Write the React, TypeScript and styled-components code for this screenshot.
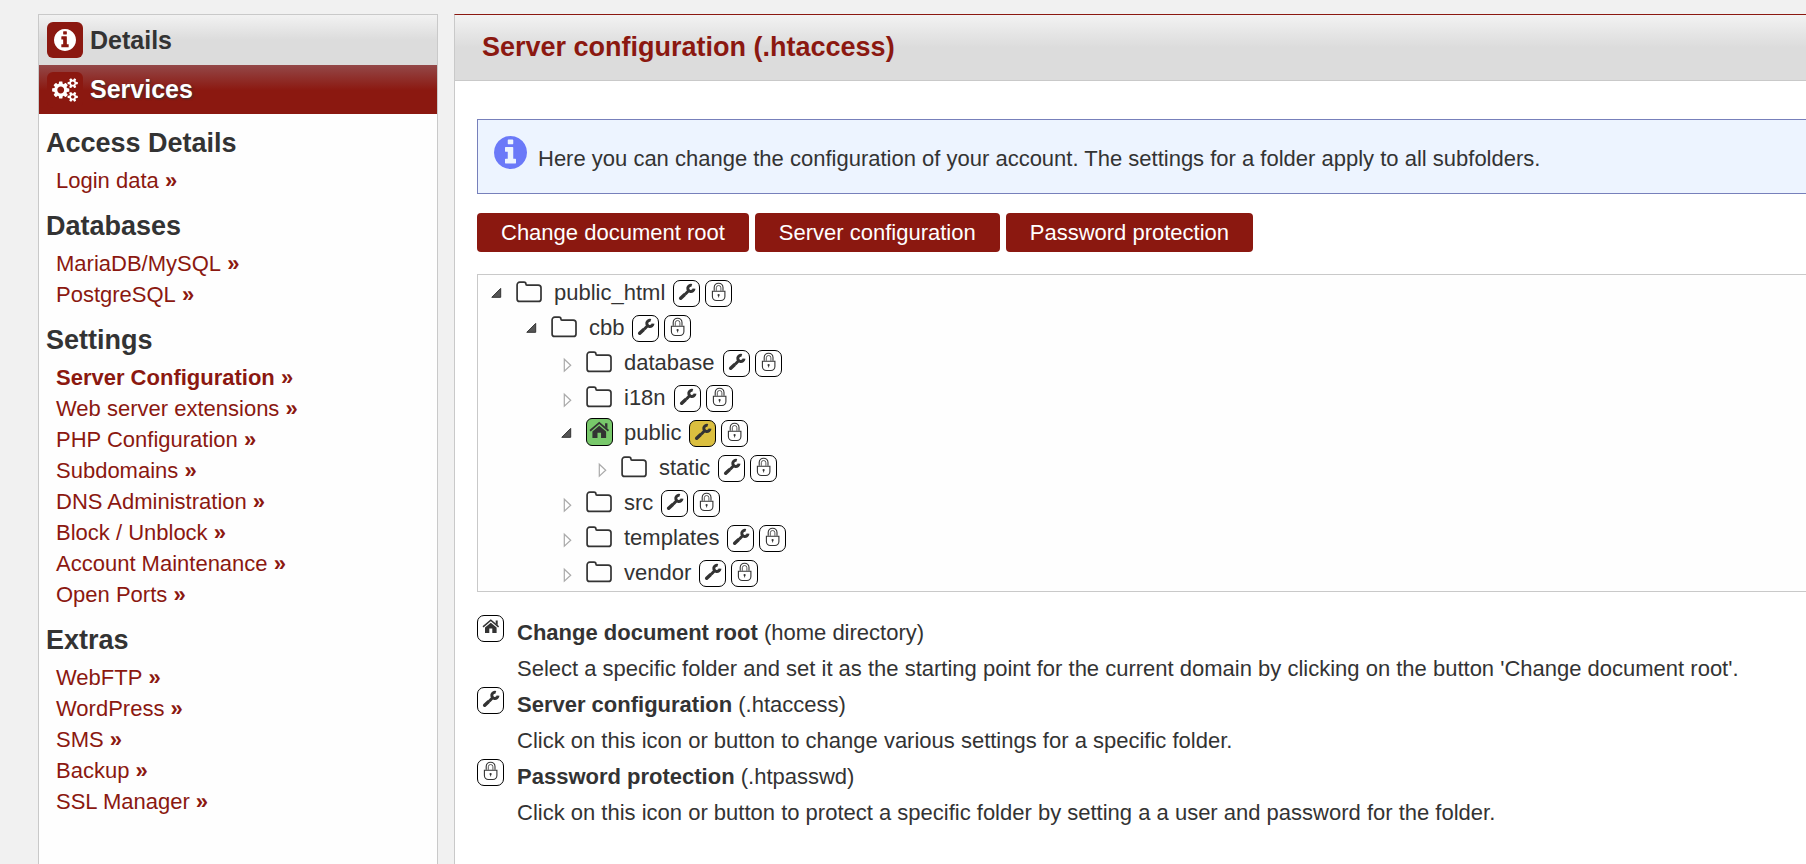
import React, { useState } from "react";
import styled, { createGlobalStyle, css } from "styled-components";

const red = "#8b1810";
const ink = "#333333";
const line = "#c9c9c9";

const GlobalStyle = createGlobalStyle`
  *, *::before, *::after { box-sizing: border-box; }
  body {
    margin: 0;
    background: #f1f1f1;
    color: ${ink};
    font-family: "Liberation Sans", Arial, Helvetica, sans-serif;
    font-size: 22px;
  }
  button { font: inherit; color: inherit; cursor: pointer; }
`;

const Page = styled.div`
  display: flex;
  gap: 16px;
  min-height: 100vh;
  padding: 14px 0 0 38px;
`;

/* ---------- sidebar ---------- */

const Sidebar = styled.aside`
  flex: 0 0 400px;
  background: #fefefe;
  border: 1px solid ${line};
  border-bottom: 0;
`;

const SideTab = styled.a<{ $active?: boolean }>`
  display: flex;
  align-items: center;
  gap: 7px;
  height: 50px;
  padding: 0 8px;
  font-size: 25px;
  font-weight: 700;
  text-decoration: none;
  color: ${ink};
  background: linear-gradient(#f2f2f2, #dcdcdc 50%);
  ${(p) =>
    p.$active &&
    css`
      height: 49px;
      color: #fff;
      text-shadow: 1px 1px 2px #333;
      background: linear-gradient(#934848, ${red} 52%);
    `}
`;

const TabIcon = styled.span`
  display: flex;
  align-items: center;
  justify-content: center;
  width: 36px;
  height: 36px;
  border-radius: 6px;
  background: ${red};
  color: #fff;
`;

const SideNav = styled.nav`
  padding: 14px 7px 32px;
`;

const NavGroup = styled.section`
  & + & { margin-top: 15px; }
`;

const NavHeading = styled.h2`
  margin: 0 0 6px;
  font-size: 27px;
  line-height: 31px;
`;

const NavList = styled.ul`
  margin: 0;
  padding: 0 0 0 10px;
  list-style: none;
`;

const NavItem = styled.li`
  line-height: 31px;
`;

const NavLink = styled.a<{ $current?: boolean }>`
  color: ${red};
  text-decoration: none;
  font-weight: ${(p) => (p.$current ? 700 : 400)};
  &::after {
    content: " »";
    font-weight: 700;
  }
`;

/* ---------- main panel ---------- */

const Main = styled.main`
  flex: 1;
  min-width: 0;
  background: #fff;
  border-left: 1px solid ${line};
  border-top: 1px solid ${red};
`;

const TitleBar = styled.header`
  padding: 17px 27px;
  border-bottom: 1px solid ${line};
  background: linear-gradient(#f2f2f2, #dcdcdc 50%);
`;

const Title = styled.h1`
  margin: 0;
  font-size: 27px;
  line-height: 31px;
  color: ${red};
`;

const Content = styled.div`
  padding: 38px 0 24px 22px;
`;

const InfoBox = styled.div`
  display: flex;
  align-items: flex-start;
  gap: 11px;
  padding: 16px;
  border: 1px solid #7780bb;
  border-right: 0;
  background: #edf4ff;
`;

const InfoMark = styled.span`
  display: flex;
  color: #6b79f8;
`;

const InfoText = styled.p`
  margin: 0;
  padding: 8px 0 3px;
  line-height: 30px;
`;

const ButtonRow = styled.div`
  display: flex;
  flex-wrap: wrap;
  gap: 6px;
  margin: 19px 0 22px;
`;

const ActionButton = styled.button`
  height: 39px;
  padding: 0 24px;
  border: 0;
  border-radius: 4px;
  background: ${red};
  color: #fff;
`;

/* ---------- folder tree ---------- */

const Tree = styled.div`
  padding: 0 0 1px 12px;
  border: 1px solid ${line};
  border-right: 0;
  background: #fefefe;
`;

const Branch = styled.ul`
  margin: 0;
  padding: 0;
  list-style: none;
  & & { padding-left: 35px; }
`;

const Row = styled.div`
  display: flex;
  align-items: center;
  height: 35px;
`;

const Toggle = styled.button`
  display: flex;
  margin: 0 14px 0 0;
  padding: 0;
  border: 0;
  background: none;
`;

const FolderSlot = styled.span<{ $home?: boolean }>`
  display: flex;
  align-items: center;
  justify-content: flex-start;
  width: 27px;
  height: 28px;
  margin: 0 11px 1px 0;
  ${(p) =>
    p.$home &&
    css`
      justify-content: center;
      border: 1px solid #000;
      border-radius: 6px;
      background: #78c86b;
    `}
`;

const FolderName = styled.span`
  margin-right: 8px;
  line-height: 35px;
`;

const badge = css`
  display: flex;
  width: 27px;
  height: 27px;
  flex: none;
  padding: 0;
  border: 1px solid #000;
  border-radius: 7px;
`;

const BadgeButton = styled.button<{ $active?: boolean }>`
  ${badge}
  margin: 2px 5px 0 0;
  background: ${(p) => (p.$active ? "#dbbf3f" : "#fff")};
`;

/* ---------- legend ---------- */

const Legend = styled.dl`
  margin: 23px 0 0;
  line-height: 36px;
`;

const Term = styled.dt`
  display: flex;
  gap: 13px;
`;

const Badge = styled.span`
  ${badge}
  background: #fff;
`;

const Description = styled.dd`
  margin: 0 0 0 40px;
`;

/* ---------- icons ---------- */

const InfoIcon = ({ size }: { size: number }) => (
  <svg width={size} height={size} viewBox="128 128 1536 1536" fill="currentColor" aria-hidden="true">
    <path d="M1152 1376v-160q0-14-9-23t-23-9h-96v-512q0-14-9-23t-23-9h-320q-14 0-23 9t-9 23v160q0 14 9 23t23 9h96v320h-96q-14 0-23 9t-9 23v160q0 14 9 23t23 9h448q14 0 23-9t9-23zm-128-896v-160q0-14-9-23t-23-9h-192q-14 0-23 9t-9 23v160q0 14 9 23t23 9h192q14 0 23-9t9-23zm640 416q0 209-103 385.5t-279.5 279.5-385.5 103-385.5-103-279.5-279.5-103-385.5 103-385.5 279.5-279.5 385.5-103 385.5 103 279.5 279.5 103 385.5z" />
  </svg>
);

const CogsIcon = () => (
  <svg width="26" height="24" viewBox="0 0 1920 1792" fill="currentColor" aria-hidden="true">
    <path d="M896 896q0-106-75-181t-181-75-181 75-75 181 75 181 181 75 181-75 75-181zm768 512q0-52-38-90t-90-38-90 38-38 90q0 53 37.5 90.5t90.5 37.5 90.5-37.5 37.5-90.5zm0-1024q0-52-38-90t-90-38-90 38-38 90q0 53 37.5 90.5t90.5 37.5 90.5-37.5 37.5-90.5zm-384 421v185q0 10-7 19.5t-16 10.5l-155 24q-11 35-32 76 34 48 90 115 7 11 7 20 0 12-7 19-23 30-82.5 89.5t-78.5 59.5q-11 0-21-7l-115-90q-37 19-77 31-11 108-23 155-7 24-30 24h-186q-11 0-20-7.5t-10-17.5l-23-153q-34-10-75-31l-118 89q-7 7-20 7-11 0-21-8-144-133-144-160 0-9 7-19 10-14 41-53t47-61q-23-44-35-82l-152-24q-10-1-17-9.5t-7-19.5v-185q0-10 7-19.5t16-10.5l155-24q11-35 32-76-34-48-90-115-7-11-7-20 0-12 7-20 22-30 82-89t79-59q11 0 21 7l115 90q34-18 77-32 11-108 23-154 7-24 30-24h186q11 0 20 7.5t10 17.5l23 153q34 10 75 31l118-89q8-7 20-7 11 0 21 8 144 133 144 160 0 8-7 19-12 16-42 54t-45 60q23 48 34 82l152 23q10 2 17 10.5t7 19.5zm640 533v140q0 16-149 31-12 27-30 52 51 113 51 138 0 4-4 7-122 71-124 71-8 0-46-47t-52-68q-20 2-30 2t-30-2q-14 21-52 68t-46 47q-2 0-124-71-4-3-4-7 0-25 51-138-18-25-30-52-149-15-149-31v-140q0-16 149-31 13-29 30-52-51-113-51-138 0-4 4-7 4-2 35-20t59-34 30-16q8 0 46 46.5t52 67.5q20-2 30-2t30 2q51-71 92-112l6-2q4 0 124 70 4 3 4 7 0 25-51 138 17 23 30 52 149 15 149 31zm0-1024v140q0 16-149 31-12 27-30 52 51 113 51 138 0 4-4 7-122 71-124 71-8 0-46-47t-52-68q-20 2-30 2t-30-2q-14 21-52 68t-46 47q-2 0-124-71-4-3-4-7 0-25 51-138-18-25-30-52-149-15-149-31v-140q0-16 149-31 13-29 30-52-51-113-51-138 0-4 4-7 4-2 35-20t59-34 30-16q8 0 46 46.5t52 67.5q20-2 30-2t30 2q51-71 92-112l6-2q4 0 124 70 4 3 4 7 0 25-51 138 17 23 30 52 149 15 149 31z" />
  </svg>
);

const WrenchIcon = () => (
  <svg width="25" height="25" viewBox="1 1 25 25" fill="none" stroke={ink} aria-hidden="true">
    <path d="M18.8 5.400A3.100 3.100 0 1 0 21 8.600" strokeWidth="3" />
    <path d="M15.600 10.800 12.200 14.200" strokeWidth="3" />
    <path d="M11.200 14.900 7.700 18.200" strokeWidth="3.500" strokeLinecap="round" />
  </svg>
);

const LockIcon = () => (
  <svg width="25" height="25" viewBox="1 1 25 25" fill="none" stroke={ink} aria-hidden="true">
    <path d="M9.2 10.8V7.6a4.4 4.4 0 0 1 8.8 0v3.2" strokeWidth="1.1" />
    <path d="M11.3 10.8V7.8a2.3 2.3 0 0 1 4.6 0v3" strokeWidth="0.8" />
    <path d="M7.4 11.3h12.5v5.2a4 4 0 0 1-4 4h-4.5a4 4 0 0 1-4-4z" strokeWidth="1.1" />
    <circle cx="13.6" cy="15" r="1.1" fill={ink} stroke="none" />
    <path d="M13.6 15v2.4" strokeWidth="0.9" />
  </svg>
);

const HouseShape = () => (
  <g fill={ink}>
    <path d="M18.7 5.6h2v4.6l-2-1.8z" />
    <path d="M6 11.9 13.8 5.3l7.8 6.600" fill="none" stroke={ink} strokeWidth="1.5" />
    <path d="M8 12.6l5.8-4.900 5.8 4.900V18h-4.3v-4.4h-3V18H8z" />
  </g>
);

const HouseIcon = () => (
  <svg width="25" height="25" viewBox="1 1 25 25" aria-hidden="true">
    <HouseShape />
  </svg>
);

const HomeFolderIcon = () => (
  <svg width="25" height="26" viewBox="3.500 2 21 22" aria-hidden="true">
    <HouseShape />
  </svg>
);

const FolderIcon = () => (
  <svg width="26" height="22" viewBox="0 0 26 22" fill="none" stroke={ink} strokeWidth="1.7" aria-hidden="true">
    <path d="M1.1 4A2.7 2.7 0 0 1 3.8 1.2H8a1.9 1.9 0 0 1 1.9 1.9 1 1 0 0 0 1 1h11.4A2.7 2.7 0 0 1 25 6.8V17.9a2.5 2.5 0 0 1-2.5 2.5H3.6A2.5 2.5 0 0 1 1.1 17.9z" />
  </svg>
);

const ArrowIcon = ({ open }: { open: boolean }) => (
  <svg width="12" height="21" viewBox="0 0 12 21" aria-hidden="true">
    {open ? (
      <path d="M10.7 6.4v8.9H1.8z" fill="#555" stroke={ink} />
    ) : (
      <path d="M4.3 7.2v12l6.4-6z" fill="#fff" stroke="#aaa" strokeWidth="1.2" />
    )}
  </svg>
);

/* ---------- data ---------- */

const groups: { title: string; links: string[] }[] = [
  { title: "Access Details", links: ["Login data"] },
  { title: "Databases", links: ["MariaDB/MySQL", "PostgreSQL"] },
  {
    title: "Settings",
    links: [
      "Server Configuration",
      "Web server extensions",
      "PHP Configuration",
      "Subdomains",
      "DNS Administration",
      "Block / Unblock",
      "Account Maintenance",
      "Open Ports",
    ],
  },
  { title: "Extras", links: ["WebFTP", "WordPress", "SMS", "Backup", "SSL Manager"] },
];

type Folder = { name: string; open?: boolean; home?: boolean; configured?: boolean; children?: Folder[] };

const root: Folder = {
  name: "public_html",
  open: true,
  children: [
    {
      name: "cbb",
      open: true,
      children: [
        { name: "database" },
        { name: "i18n" },
        { name: "public", open: true, home: true, configured: true, children: [{ name: "static" }] },
        { name: "src" },
        { name: "templates" },
        { name: "vendor" },
      ],
    },
  ],
};

const legend = [
  {
    icon: <HouseIcon />,
    term: "Change document root",
    note: "(home directory)",
    text: "Select a specific folder and set it as the starting point for the current domain by clicking on the button 'Change document root'.",
  },
  {
    icon: <WrenchIcon />,
    term: "Server configuration",
    note: "(.htaccess)",
    text: "Click on this icon or button to change various settings for a specific folder.",
  },
  {
    icon: <LockIcon />,
    term: "Password protection",
    note: "(.htpasswd)",
    text: "Click on this icon or button to protect a specific folder by setting a a user and password for the folder.",
  },
];

function TreeNode({ folder }: { folder: Folder }) {
  const [open, setOpen] = useState(!!folder.open);
  return (
    <li>
      <Row>
        <Toggle aria-label={`Toggle ${folder.name}`} aria-expanded={open} onClick={() => setOpen(!open)}>
          <ArrowIcon open={open} />
        </Toggle>
        <FolderSlot $home={folder.home}>{folder.home ? <HomeFolderIcon /> : <FolderIcon />}</FolderSlot>
        <FolderName>{folder.name}</FolderName>
        <BadgeButton $active={folder.configured} aria-label={`Server configuration for ${folder.name}`}>
          <WrenchIcon />
        </BadgeButton>
        <BadgeButton aria-label={`Password protection for ${folder.name}`}>
          <LockIcon />
        </BadgeButton>
      </Row>
      {open && folder.children && (
        <Branch>
          {folder.children.map((child) => (
            <TreeNode key={child.name} folder={child} />
          ))}
        </Branch>
      )}
    </li>
  );
}

export default function App() {
  return (
    <>
      <GlobalStyle />
      <Page>
        <Sidebar>
          <SideTab href="#details">
            <TabIcon>
              <InfoIcon size={22} />
            </TabIcon>
            Details
          </SideTab>
          <SideTab href="#services" $active>
            <TabIcon>
              <CogsIcon />
            </TabIcon>
            Services
          </SideTab>
          <SideNav>
            {groups.map((group) => (
              <NavGroup key={group.title}>
                <NavHeading>{group.title}</NavHeading>
                <NavList>
                  {group.links.map((link) => (
                    <NavItem key={link}>
                      <NavLink href="#" $current={link === "Server Configuration"}>
                        {link}
                      </NavLink>
                    </NavItem>
                  ))}
                </NavList>
              </NavGroup>
            ))}
          </SideNav>
        </Sidebar>

        <Main>
          <TitleBar>
            <Title>Server configuration (.htaccess)</Title>
          </TitleBar>
          <Content>
            <InfoBox>
              <InfoMark>
                <InfoIcon size={33} />
              </InfoMark>
              <InfoText>
                Here you can change the configuration of your account. The settings for a folder apply to all
                subfolders.
              </InfoText>
            </InfoBox>
            <ButtonRow>
              <ActionButton>Change document root</ActionButton>
              <ActionButton>Server configuration</ActionButton>
              <ActionButton>Password protection</ActionButton>
            </ButtonRow>
            <Tree>
              <Branch>
                <TreeNode folder={root} />
              </Branch>
            </Tree>
            <Legend>
              {legend.map((entry) => (
                <React.Fragment key={entry.term}>
                  <Term>
                    <Badge>{entry.icon}</Badge>
                    <span>
                      <b>{entry.term}</b> {entry.note}
                    </span>
                  </Term>
                  <Description>{entry.text}</Description>
                </React.Fragment>
              ))}
            </Legend>
          </Content>
        </Main>
      </Page>
    </>
  );
}
